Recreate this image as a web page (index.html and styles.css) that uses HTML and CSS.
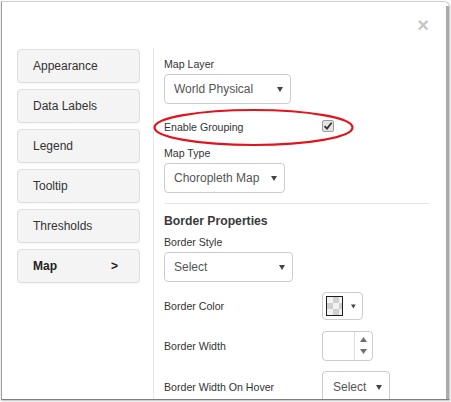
FILE: index.html
```html
<!DOCTYPE html>
<html>
<head>
<meta charset="utf-8">
<link rel="stylesheet" href="styles.css">
</head>
<body>
<div class="modal">
  <div class="modal-header">
    <span class="close">&times;</span>
  </div>
  <div class="modal-body">
    <nav class="side-nav">
      <div class="nav-item">Appearance</div>
      <div class="nav-item">Data Labels</div>
      <div class="nav-item">Legend</div>
      <div class="nav-item">Tooltip</div>
      <div class="nav-item">Thresholds</div>
      <div class="nav-item active"><span>Map</span><span>&gt;</span></div>
    </nav>
    <div class="panel">
      <div class="label">Map Layer</div>
      <div class="select sel-layer"><span>World Physical</span><svg class="caret" width="6" height="5" viewBox="0 0 6 5"><polygon points="0,0 6,0 3,5"/></svg></div>

      <div class="field-row grouping">
        <span class="row-label">Enable Grouping</span>
        <span class="checkbox"><svg width="10" height="10" viewBox="0 0 10 10"><path d="M1.5 5.2 L4 7.6 L8.6 1.8" fill="none" stroke="#333" stroke-width="1.8"/></svg></span>
      </div>

      <div class="label">Map Type</div>
      <div class="select sel-type"><span>Choropleth Map</span><svg class="caret" width="6" height="5" viewBox="0 0 6 5"><polygon points="0,0 6,0 3,5"/></svg></div>

      <div class="divider"></div>

      <div class="section-title">Border Properties</div>
      <div class="label">Border Style</div>
      <div class="select sel-style"><span>Select</span><svg class="caret" width="6" height="5" viewBox="0 0 6 5"><polygon points="0,0 6,0 3,5"/></svg></div>

      <div class="field-row row-color">
        <span class="row-label">Border Color</span>
        <div class="color-btn"><span class="swatch"></span><svg class="caret" width="5" height="5" viewBox="0 0 6 5"><polygon points="0,0 6,0 3,5"/></svg></div>
      </div>

      <div class="field-row row-width">
        <span class="row-label">Border Width</span>
        <div class="number-input">
          <span class="num-value"></span>
          <span class="spinner">
            <svg width="7" height="5" viewBox="0 0 7 5"><polygon points="0,5 7,5 3.5,0"/></svg>
            <svg width="7" height="5" viewBox="0 0 7 5"><polygon points="0,0 7,0 3.5,5"/></svg>
          </span>
        </div>
      </div>

      <div class="field-row row-hover">
        <span class="row-label">Border Width On Hover</span>
        <div class="select sel-hover"><span>Select</span><svg class="caret" width="6" height="5" viewBox="0 0 6 5"><polygon points="0,0 6,0 3,5"/></svg></div>
      </div>
    </div>
  </div>
  <svg class="annotation" width="210" height="44" viewBox="0 0 210 44"><ellipse cx="101.5" cy="20.5" rx="99" ry="17.5"/></svg>
</div>
</body>
</html>
```

FILE: styles.css
```css
* { box-sizing: border-box; }

html, body {
  margin: 0;
  padding: 0;
  background: #fff;
}

body {
  font-family: "Liberation Sans", Arial, sans-serif;
  color: #333;
  width: 451px;
  height: 402px;
  overflow: hidden;
  padding: 1px 0 0 1px;
}

.modal {
  position: relative;
  width: 449px;
  height: 399px;
  border: 1px solid #cfcfcf;
  border-left-color: #9c9c9c;
  border-bottom: 1px solid #7d7d7d;
  border-radius: 0 6px 0 0;
  background: #fff;
  overflow: hidden;
  box-shadow: 0 1px 2px rgba(0,0,0,.25);
}

.modal::after {
  content: "";
  position: absolute;
  right: 0;
  top: 4px;
  bottom: 0;
  width: 3px;
  background: #ababab;
}

.modal-header {
  height: 46px;
  display: flex;
  justify-content: flex-end;
  align-items: center;
  padding-right: 20px;
}

.close {
  font-size: 20px;
  font-weight: bold;
  line-height: 1;
  color: #c6c6c6;
  margin-top: -1px;
}

.modal-body {
  display: flex;
  padding-left: 15px;
  height: 351px;
}

.side-nav {
  width: 123px;
  margin-right: 13px;
  padding-top: 1px;
  display: flex;
  flex-direction: column;
  gap: 6px;
}

.nav-item {
  height: 34px;
  display: flex;
  align-items: center;
  justify-content: space-between;
  padding: 0 21px 0 15px;
  background: #f4f4f4;
  border: 1px solid #dedede;
  border-radius: 4px;
  box-shadow: 0 1px 1px rgba(0,0,0,.04);
  font-size: 12px;
  color: #333;
}

.nav-item.active {
  font-weight: bold;
  color: #222;
}

.panel {
  flex: 1;
  border-left: 1px solid #e8e8e8;
  padding: 9px 20px 0 10px;
}

.label {
  font-size: 10.6px;
  line-height: 15px;
  height: 15px;
  color: #333;
  margin-bottom: 2px;
}

.select {
  height: 30px;
  display: flex;
  align-items: center;
  justify-content: space-between;
  padding: 0 7px 0 9px;
  border: 1px solid #cccccc;
  border-radius: 4px;
  background: #fff;
  font-size: 12px;
  color: #555;
}

.caret { fill: #444; display: block; }

.sel-layer { width: 127px; }
.sel-type { width: 121px; }
.sel-style { width: 129px; margin-top: 1px; }
.sel-hover { width: 68px; height: 32px; padding-left: 10px; }

.field-row {
  display: grid;
  grid-template-columns: 158px auto;
  align-items: center;
  justify-items: start;
}

.row-label {
  font-size: 10.6px;
  line-height: 15px;
  color: #333;
}

.grouping {
  margin-top: 15px;
  margin-bottom: 11px;
  height: 16px;
}

.checkbox {
  width: 12px;
  height: 12px;
  border: 1px solid #9d9d9d;
  border-radius: 2px;
  background: #e4e4e4;
  display: flex;
  align-items: center;
  justify-content: center;
  margin-top: -3px;
}

.checkbox svg { display: block; }

.divider {
  margin-top: 10px;
  border-top: 1px solid #e6e6e6;
  height: 0;
}

.section-title {
  margin-top: 9px;
  font-size: 12.2px;
  font-weight: bold;
  line-height: 16px;
  color: #3a3a3a;
  margin-bottom: 6px;
}

.row-color { margin-top: 10px; }
.row-width { margin-top: 11px; }
.row-hover { margin-top: 10px; }

.color-btn {
  width: 41px;
  height: 28px;
  border: 1px solid #cccccc;
  border-radius: 4px;
  display: flex;
  align-items: center;
  padding: 0 6px 0 3px;
  gap: 8px;
}

.swatch {
  width: 18px;
  height: 20px;
  border: 1px solid #1e1e1e;
  background-color: #f2f2f2;
  background-image: conic-gradient(#cfcfcf 25%, transparent 0 50%, #cfcfcf 0 75%, transparent 0);
  background-size: 12px 12px;
  background-position: 0 0;
}

.number-input {
  width: 51px;
  height: 30px;
  border: 1px solid #cccccc;
  border-radius: 4px;
  display: flex;
}

.num-value { width: 31px; }

.spinner {
  flex: 1;
  border-left: 1px solid #dcdcdc;
  display: flex;
  flex-direction: column;
  justify-content: space-between;
  align-items: center;
  padding: 5px 0 6px;
  fill: #6e6e6e;
}

.spinner svg { display: block; }

.annotation {
  position: absolute;
  left: 150px;
  top: 105px;
  fill: none;
  stroke: #e3131b;
  stroke-width: 2.2;
  pointer-events: none;
}
```
